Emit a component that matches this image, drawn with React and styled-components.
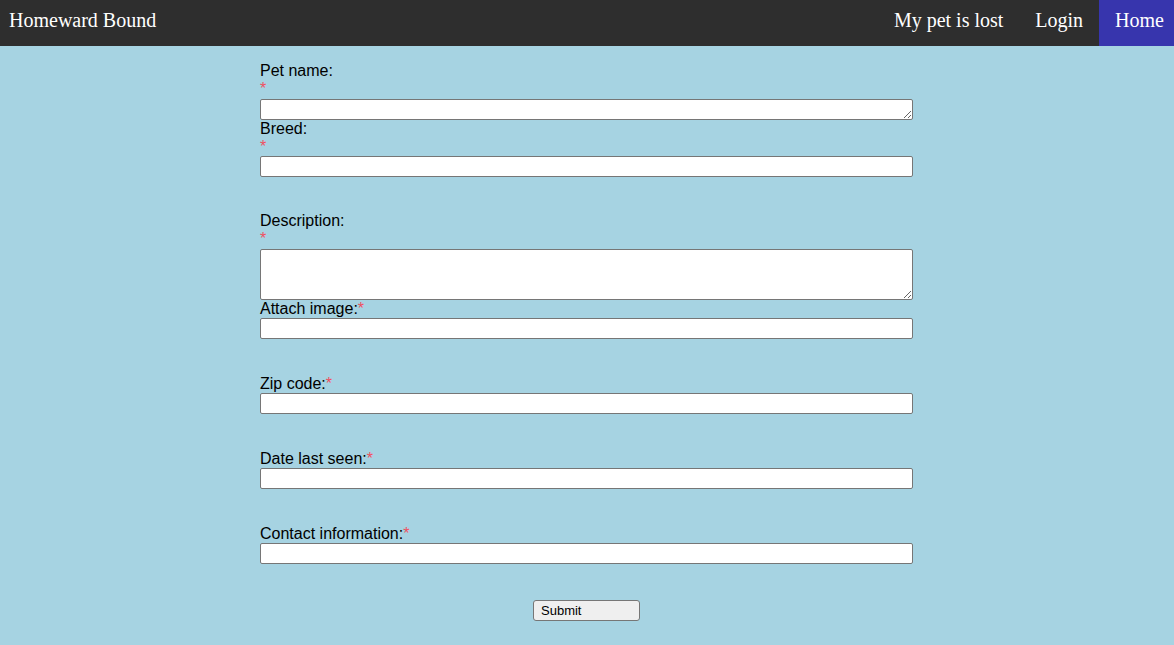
import React from "react";
import styled, { createGlobalStyle } from "styled-components";

const GlobalStyle = createGlobalStyle`
  html, body {
    margin: 0;
    padding: 0;
    background: #a6d3e2;
    min-height: 100%;
  }
  body {
    font-family: "Liberation Sans", Arial, sans-serif;
  }
`;

const Page = styled.div`
  min-height: 645px;
  background: #a6d3e2;
`;

const NavBar = styled.nav`
  display: flex;
  align-items: stretch;
  height: 46px;
  background: #2e2e2e;
  font-family: "Liberation Serif", "Times New Roman", serif;
  font-size: 20px;
`;

const Brand = styled.a`
  color: #fff;
  text-decoration: none;
  line-height: 41px;
  padding: 0 9px;
  margin-right: auto;
`;

const NavLink = styled.a`
  color: #fff;
  text-decoration: none;
  line-height: 41px;
  padding: ${(p) => (p.$active ? "0 10px 0 16px" : "0 16px")};
  background: ${(p) => (p.$active ? "#3735ad" : "transparent")};
`;

const Form = styled.form`
  width: 653px;
  margin-left: calc(50% - 327px);
  padding-top: 16px;
  display: flex;
  flex-direction: column;
`;

const Field = styled.div`
  display: flex;
  flex-direction: column;
  margin-top: ${(p) => p.$space || 0}px;
`;

const Label = styled.label`
  font-size: 16px;
  color: #000;
  line-height: 18px;
`;

const Star = styled.span`
  color: #f0505f;
  font-size: 16px;
  line-height: 18px;
  display: ${(p) => (p.$h ? "block" : "inline")};
  height: ${(p) => (p.$h ? `${p.$h}px` : "auto")};
`;

const TextInput = styled.input`
  box-sizing: border-box;
  display: block;
  width: 100%;
  height: 21px;
  margin: 0;
  border: 1px solid #767676;
  border-radius: 2px;
  background: #fff;
  font-size: 13px;
`;

const TextArea = styled.textarea`
  box-sizing: border-box;
  display: block;
  width: 100%;
  height: ${(p) => p.$h}px;
  margin: 0;
  border: 1px solid #767676;
  border-radius: 2px;
  background: #fff;
  font-size: 13px;
`;

const Actions = styled.div`
  display: flex;
  justify-content: center;
  margin-top: 36px;
`;

const SubmitButton = styled.button`
  box-sizing: border-box;
  width: 107px;
  height: 21px;
  padding: 0 7px;
  text-align: left;
  font-family: "Liberation Sans", Arial, sans-serif;
  font-size: 13px;
  color: #000;
  background: #efefef;
  border: 1px solid #767676;
  border-radius: 3px;
`;

const App = () => {
  return (
    <Page>
      <GlobalStyle />
      <NavBar>
        <Brand href="#">Homeward Bound</Brand>
        <NavLink href="#">My pet is lost</NavLink>
        <NavLink href="#">Login</NavLink>
        <NavLink href="#" $active>Home</NavLink>
      </NavBar>
      <Form onSubmit={(e) => e.preventDefault()}>
        <Field>
          <Label>Pet name:</Label>
          <Star $h={19}>*</Star>
          <TextArea $h={21} />
        </Field>
        <Field>
          <Label>Breed:</Label>
          <Star $h={18}>*</Star>
          <TextInput type="text" />
        </Field>
        <Field $space={35}>
          <Label>Description:</Label>
          <Star $h={19}>*</Star>
          <TextArea $h={51} />
        </Field>
        <Field>
          <Label>Attach image:<Star>*</Star></Label>
          <TextInput type="text" />
        </Field>
        <Field $space={36}>
          <Label>Zip code:<Star>*</Star></Label>
          <TextInput type="text" />
        </Field>
        <Field $space={36}>
          <Label>Date last seen:<Star>*</Star></Label>
          <TextInput type="text" />
        </Field>
        <Field $space={36}>
          <Label>Contact information:<Star>*</Star></Label>
          <TextInput type="text" />
        </Field>
        <Actions>
          <SubmitButton type="submit">Submit</SubmitButton>
        </Actions>
      </Form>
    </Page>
  );
};

export default App;
